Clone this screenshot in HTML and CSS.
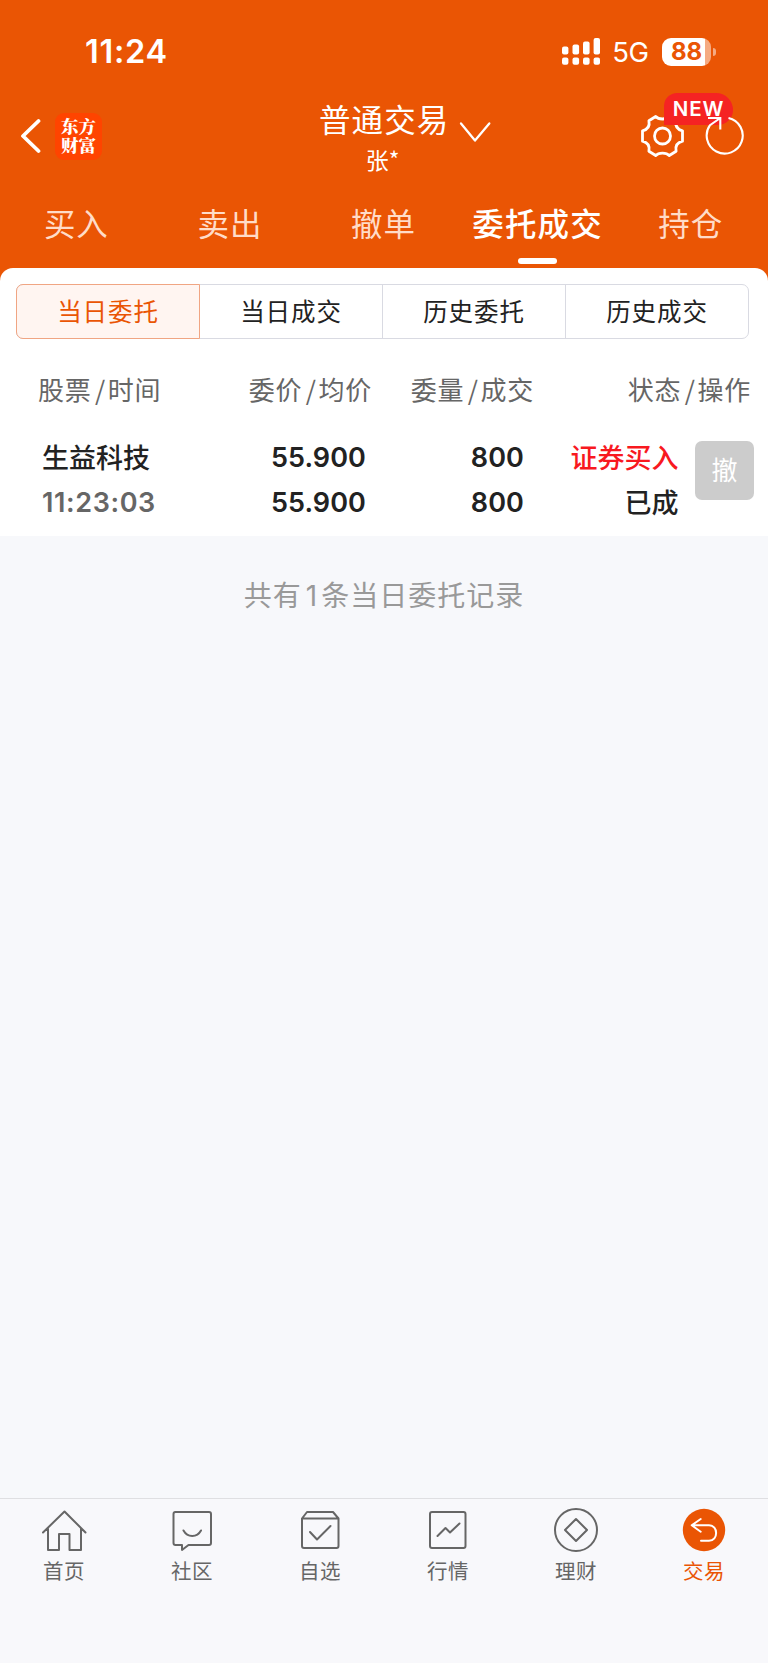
FILE: index.html
```
<!DOCTYPE html>
<html lang="zh-CN">
<head>
    <meta charset="UTF-8">
    <meta name="viewport" content="width=device-width, initial-scale=1.0">
    <title>委托成交</title>
    <link rel="stylesheet" href="styles.css">
</head>
<body>
<div class="app">
    <header class="header">
        <div class="status">
            <span class="time">11:24</span>
            <div class="status-right">
                <svg class="signal" width="38" height="27" viewBox="0 0 38 27" fill="#fff">
                    <rect x="0" y="8.5" width="6.4" height="8" rx="2"/>
                    <rect x="10.5" y="6.5" width="6.6" height="10" rx="2"/>
                    <rect x="21" y="3.5" width="6.6" height="13" rx="2"/>
                    <rect x="31.6" y="0" width="6.4" height="16.5" rx="2"/>
                    <rect x="0" y="19.6" width="6.4" height="7.2" rx="2"/>
                    <rect x="10.5" y="19.6" width="6.6" height="7.2" rx="2"/>
                    <rect x="21" y="19.6" width="6.6" height="7.2" rx="2"/>
                    <rect x="31.6" y="19.6" width="6.4" height="7.2" rx="2"/>
                </svg>
                <span class="net">5G</span>
                <span class="battery">88</span>
                <span class="battery-cap"></span>
            </div>
        </div>

        <div class="nav">
            <div class="nav-left">
                <svg width="22" height="36" viewBox="0 0 22 36" fill="none" stroke="#fff" stroke-width="3.8" stroke-linecap="round" stroke-linejoin="round">
                    <path d="M19.500 3 4 18l15.500 15"/>
                </svg>
                <div class="logo">
                    <span>东方</span>
                    <span>财富</span>
                </div>
            </div>
            <div class="nav-title">
                <h1>普通交易</h1>
                <p>张*</p>
            </div>
            <svg class="arrow" width="32" height="22" viewBox="0 0 32 22" fill="none" stroke="#fff" stroke-width="2.3" stroke-linecap="round" stroke-linejoin="round">
                <path d="M2 2.500 16 19.500 30.300 2.500"/>
            </svg>
            <div class="nav-right">
                <svg width="44" height="44" viewBox="-22.5 -22 44 44" fill="none" stroke="#fff" stroke-width="2.8" stroke-linejoin="round">
                    <path d="M-6.800-19.500C-4-16.200 4-16.200 6.800-19.500L13.600-15.300C12.500-10 15-6.500 20-5.200V5.200C15 6.500 12.500 10 13.600 15.300L6.800 19.500C4 16.200-4 16.200-6.800 19.500L-13.600 15.300C-12.500 10-15 6.500-20 5.200V-5.200C-15-6.500-12.500-10-13.600-15.300Z"/>
                    <circle r="8"/>
                </svg>
                <span class="badge">NEW</span>
                <svg class="refresh" width="40" height="40" viewBox="0 0 40 40" fill="none" stroke="#fff" stroke-width="2.1">
                    <path d="M23.500 2A18 18 0 1 1 5 9.200L15.300 2M3 2h12.300v11.500"/>
                </svg>
            </div>
        </div>

        <nav class="tabs">
            <span class="tab">买入</span>
            <span class="tab">卖出</span>
            <span class="tab">撤单</span>
            <span class="tab active">委托成交</span>
            <span class="tab">持仓</span>
        </nav>
    </header>

    <main class="main">
        <section class="panel">
            <div class="segment">
                <span class="seg on">当日委托</span>
                <span class="seg">当日成交</span>
                <span class="seg">历史委托</span>
                <span class="seg">历史成交</span>
            </div>
            <div class="row head">
                <span class="c1">股票<i>/</i>时间</span>
                <span class="c2">委价<i>/</i>均价</span>
                <span class="c3">委量<i>/</i>成交</span>
                <span class="c4">状态<i>/</i>操作</span>
            </div>
            <div class="row order">
                <div class="c1">
                    <div class="cn">生益科技</div>
                    <div class="num gray">11:23:03</div>
                </div>
                <div class="c2 num">
                    <div>55.900</div>
                    <div>55.900</div>
                </div>
                <div class="c3 num">
                    <div>800</div>
                    <div>800</div>
                </div>
                <div class="c4 cn">
                    <div class="red">证券买入</div>
                    <div>已成</div>
                </div>
                <button class="cancel">撤</button>
            </div>
        </section>
        <p class="count">共有<i>1</i>条当日委托记录</p>
    </main>

    <footer class="bottom">
        <div class="item">
            <svg width="48" height="48" viewBox="0 0 48 48">
                <path d="M3 26.500 24.500 5.500 45.500 26.500M8 22.500V44h11V28h10.500V44H41V22.500"/>
            </svg>
            <span>首页</span>
        </div>
        <div class="item">
            <svg width="48" height="48" viewBox="0 0 48 48">
                <path d="M7 6h34a2 2 0 0 1 2 2v29a2 2 0 0 1-2 2H20.500l-6.500 5V39H7.500a2 2 0 0 1-2-2V8a2 2 0 0 1 2-2ZM15.500 24.500c4 7.300 13.500 7.300 17.500 0"/>
            </svg>
            <span>社区</span>
        </div>
        <div class="item">
            <svg width="48" height="48" viewBox="0 0 48 48">
                <path d="M6 12.500 11 6h26l5.500 6.500V40a2 2 0 0 1-2 2H8a2 2 0 0 1-2-2ZM6 12.500h36.500M14 26l7 7.500L34.500 20"/>
            </svg>
            <span>自选</span>
        </div>
        <div class="item">
            <svg width="48" height="48" viewBox="0 0 48 48">
                <rect x="6" y="6" width="35.500" height="36" rx="2"/>
                <path d="m13.500 30 8-8 4.500 4.500 9.500-9"/>
            </svg>
            <span>行情</span>
        </div>
        <div class="item">
            <svg width="48" height="48" viewBox="0 0 48 48">
                <circle cx="24" cy="24" r="21"/>
                <path d="M24 13 35 24 24 35 13 24Z"/>
            </svg>
            <span>理财</span>
        </div>
        <div class="item current">
            <svg width="48" height="48" viewBox="0 0 48 48">
                <circle class="disc" cx="24" cy="24" r="21.200"/>
                <path d="M20.700 13 11.700 19.300l9 6.400M12 19.300H29c9.500 0 9.500 15.400 0 15.400h-8"/>
            </svg>
            <span>交易</span>
        </div>
    </footer>
</div>
</body>
</html>
```

FILE: styles.css
```
* {
    box-sizing: border-box;
}

body {
    margin: 0;
    font-family: "Noto Sans CJK SC", sans-serif;
    background-color: #f7f8fb;
    color: #222;
}

h1, p {
    margin: 0;
    font-weight: normal;
}

svg {
    display: block;
    flex: none;
}

i {
    font-style: normal;
}

.app {
    width: 768px;
    height: 1663px;
    display: flex;
    flex-direction: column;
}

/* ヘッダー */
.header {
    height: 268px;
    background-color: #ea5504;
    color: #fff;
}

.status {
    height: 88px;
    padding: 15px 52px 0 85px;
    display: flex;
    justify-content: space-between;
    align-items: flex-start;
    font-family: Inter, sans-serif;
}

.time {
    font-size: 32.5px;
    line-height: 73px;
    font-weight: 600;
    letter-spacing: 0.7px;
}

.status-right {
    height: 73px;
    display: flex;
    align-items: center;
}

.net {
    margin: 1px 13.5px 0 12px;
    font-size: 27.5px;
    letter-spacing: -0.5px;
}

.battery {
    width: 49px;
    height: 28px;
    border-radius: 9px;
    background: linear-gradient(to right, #fff 43px, #f5aa82 43px);
    color: #ea5504;
    font-size: 24px;
    font-weight: 700;
    line-height: 28px;
    text-align: center;
}

.battery-cap {
    width: 3px;
    height: 8px;
    margin-left: 2px;
    border-radius: 0 3px 3px 0;
    background-color: #f5aa82;
}

.nav {
    height: 96px;
    display: grid;
    grid-template-columns: 319px 136px 185px 128px;
}

.nav-left {
    height: 96px;
    padding-left: 19px;
    display: flex;
    align-items: center;
    gap: 14px;
}

.logo {
    width: 47px;
    height: 47px;
    padding-top: 3px;
    border-radius: 9px;
    background-color: #ff4400;
    font-family: "Noto Serif CJK SC", "Noto Sans CJK SC", serif;
    font-size: 17.5px;
    font-weight: 900;
    line-height: 19.5px;
    text-align: center;
}

.logo span {
    display: block;
}

.nav-title {
    width: 127px;
    padding-top: 6px;
    text-align: center;
}

.nav-title h1 {
    font-size: 31.5px;
    line-height: 48px;
    letter-spacing: 1.1px;
    white-space: nowrap;
}

.nav-title p {
    font-size: 23px;
    line-height: 34px;
}

.arrow {
    margin: 33px 0 0 4px;
}

.nav-right {
    position: relative;
    display: flex;
    align-items: center;
}

.badge {
    position: absolute;
    left: 23.5px;
    top: 5px;
    width: 69px;
    height: 32px;
    padding-left: 1px;
    border-radius: 14px 18px 16px 0;
    background-color: #f52323;
    font-family: Inter, sans-serif;
    font-size: 20.5px;
    font-weight: 600;
    line-height: 32px;
    letter-spacing: 0.9px;
    text-align: center;
}

.refresh {
    position: relative;
    margin-left: 20.5px;
}

.tabs {
    height: 84px;
    display: grid;
    grid-template-columns: repeat(5, 1fr);
}

.tab {
    display: flex;
    flex-direction: column;
    align-items: center;
    padding: 14px 1px 0 0;
    color: #ffdcc8;
    font-size: 31.5px;
    line-height: 48px;
    letter-spacing: 0.9px;
    white-space: nowrap;
}

.tab.active {
    padding-right: 0;
    color: #fff;
    font-weight: 500;
    letter-spacing: 1.2px;
}

.tab.active::after {
    content: "";
    width: 39px;
    height: 6px;
    margin-top: 12px;
    border-radius: 3px;
    background-color: #fff;
}

/* 注文一覧 */
.main {
    flex: 1;
    background: linear-gradient(#ea5504 16px, #f7f8fb 16px);
}

.panel {
    height: 268px;
    padding-top: 16px;
    border-radius: 13px 13px 0 0;
    background-color: #fff;
}

.segment {
    height: 55px;
    margin: 0 19px 0 16px;
    display: flex;
    border: 1px solid #d9dae2;
    border-radius: 7px;
}

.seg {
    flex: 1;
    border-right: 1px solid #d9dae2;
    font-size: 24.5px;
    line-height: 52px;
    letter-spacing: 0.9px;
    text-align: center;
}

.seg:last-child {
    border-right: none;
}

.seg.on {
    margin: -1px 0 -1px -1px;
    border: 1px solid #f0a583;
    border-radius: 7px 0 0 7px;
    background-color: #fff5f1;
    color: #ea5504;
}

.row {
    display: grid;
}

.c2, .c3, .c4 {
    text-align: right;
}

.head {
    padding: 30px 17px 0 38px;
    grid-template-columns: 172px 162px 162px 1fr;
    color: #666;
    font-size: 26px;
    line-height: 40px;
    letter-spacing: 0.7px;
}

.head i {
    margin: 0 2px 0 3.5px;
}

.order {
    padding: 25px 14px 0 42px;
    grid-template-columns: 162px 162px 158px 154.5px 1fr;
    font-size: 27px;
    line-height: 45px;
}

.cn {
    font-weight: 500;
}

.num {
    padding-top: 1px;
    font-family: Inter, sans-serif;
    font-size: 27px;
    font-weight: 600;
    letter-spacing: 0.1px;
}

.gray {
    color: #666;
    letter-spacing: 0.6px;
}

.red {
    color: #f8191f;
}

.cancel {
    justify-self: end;
    width: 59px;
    height: 59px;
    margin-top: 7px;
    padding: 0 0 3px;
    border: none;
    border-radius: 7px;
    background-color: #ccc;
    color: #fff;
    font-family: inherit;
    font-size: 26px;
    line-height: 56px;
}

.count {
    padding-top: 37px;
    color: #999;
    font-size: 28px;
    line-height: 42px;
    letter-spacing: 1px;
    text-align: center;
}

.count i {
    margin: 0 3px 0 4px;
    font-family: Inter, sans-serif;
}

/* 下部メニュー */
.bottom {
    height: 165px;
    padding-top: 7px;
    display: grid;
    grid-template-columns: repeat(6, 1fr);
    border-top: 1px solid #dfdfe2;
    background-color: #f8f8fb;
}

.item {
    display: flex;
    flex-direction: column;
    align-items: center;
    color: #666;
    font-size: 20.5px;
    line-height: 32px;
    letter-spacing: 0.6px;
}

.item svg {
    fill: none;
    stroke: #666;
    stroke-width: 2;
    stroke-linecap: round;
    stroke-linejoin: round;
}

.item.current {
    color: #ea5504;
}

.item.current svg {
    stroke: #fff;
}

.item .disc {
    fill: #ea5504;
    stroke: none;
}
```
